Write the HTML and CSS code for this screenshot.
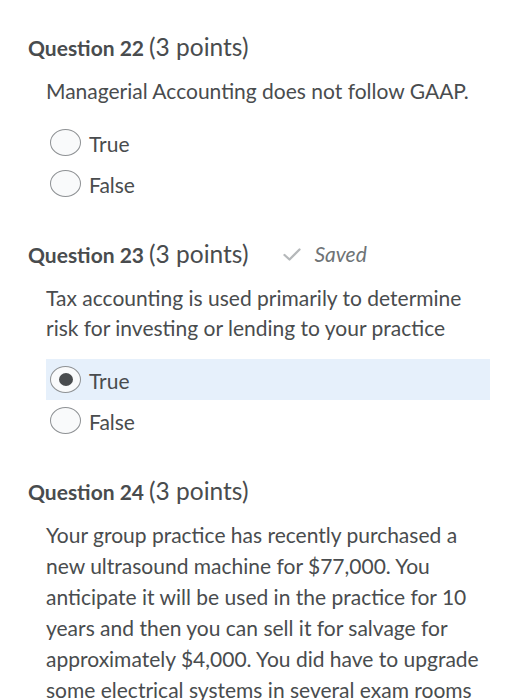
FILE: index.html
```html
<!DOCTYPE html>
<html>
<head>
<meta charset="utf-8">
<link rel="stylesheet" href="styles.css">
</head>
<body>
<div class="page">
  <section class="question">
    <h2 class="q-title"><span class="q-num">Question 22</span><span class="q-pts">(3 points)</span></h2>
    <div class="q-body">
      <p class="q-text">Managerial Accounting does not follow GAAP.</p>
      <div class="options">
        <div class="option"><span class="radio"></span><span class="opt-label">True</span></div>
        <div class="option"><span class="radio"></span><span class="opt-label">False</span></div>
      </div>
    </div>
  </section>
  <section class="question">
    <h2 class="q-title"><span class="q-num">Question 23</span><span class="q-pts">(3 points)</span>
      <span class="saved"><svg class="check" viewBox="0 0 18 13" width="18" height="13"><path d="M1.5 7 L6.5 11.5 L16.5 1.5" fill="none" stroke="#b5b8ba" stroke-width="2.3" stroke-linecap="round" stroke-linejoin="round"/></svg><span class="saved-text">Saved</span></span>
    </h2>
    <div class="q-body">
      <p class="q-text">Tax accounting is used primarily to determine<br>risk for investing or lending to your practice</p>
      <div class="options">
        <div class="option selected"><span class="radio checked"></span><span class="opt-label">True</span></div>
        <div class="option"><span class="radio"></span><span class="opt-label">False</span></div>
      </div>
    </div>
  </section>
  <section class="question">
    <h2 class="q-title"><span class="q-num">Question 24</span><span class="q-pts">(3 points)</span></h2>
    <div class="q-body">
      <p class="q-text long">Your group practice has recently purchased a<br>new ultrasound machine for $77,000. You<br>anticipate it will be used in the practice for 10<br>years and then you can sell it for salvage for<br>approximately $4,000. You did have to upgrade<br>some electrical systems in several exam rooms</p>
    </div>
  </section>
</div>
</body>
</html>
```

FILE: styles.css
```css
html, body {
  margin: 0;
  padding: 0;
  background: #ffffff;
}
body {
  font-family: Lato, "Open Sans", sans-serif;
  color: #494c4e;
}
.page {
  padding: 33px 42px 0 28px;
}
.question {
  margin-bottom: 36px;
}
.q-title {
  margin: 0;
  display: flex;
  align-items: baseline;
  font-weight: 400;
  line-height: 28px;
  height: 28px;
}
.q-num {
  font-size: 21px;
  font-weight: 700;
  color: #494c4e;
}
.q-pts {
  font-size: 24.5px;
  margin-left: 5px;
  color: #494c4e;
}
.saved {
  display: inline-flex;
  align-items: center;
  margin-left: 35px;
  align-self: center;
}
.check {
  margin-right: 13px;
}
.saved-text {
  font-style: italic;
  font-size: 21px;
  color: #6e7376;
}
.q-body {
  padding-left: 18px;
}
.q-text {
  margin: 15px 0 16px;
  font-size: 21px;
  line-height: 30px;
}
.q-text.long {
  line-height: 31px;
  margin-top: 14px;
}
.options {
  display: flex;
  flex-direction: column;
}
.option {
  display: flex;
  align-items: center;
  height: 41px;
}
.option.selected {
  background: #e6f0fb;
}
.radio {
  box-sizing: border-box;
  width: 31px;
  height: 27px;
  border: 1.5px solid #8e9194;
  border-radius: 50%;
  background: #f9fafb;
  margin-left: 4px;
  margin-right: 8px;
  position: relative;
}
.radio.checked::after {
  content: "";
  position: absolute;
  left: 50%;
  top: 50%;
  width: 14px;
  height: 13px;
  margin-left: -7px;
  margin-top: -6.5px;
  border-radius: 50%;
  background: #494c4e;
}
.opt-label {
  font-size: 21px;
  padding-top: 2px;
}
```
